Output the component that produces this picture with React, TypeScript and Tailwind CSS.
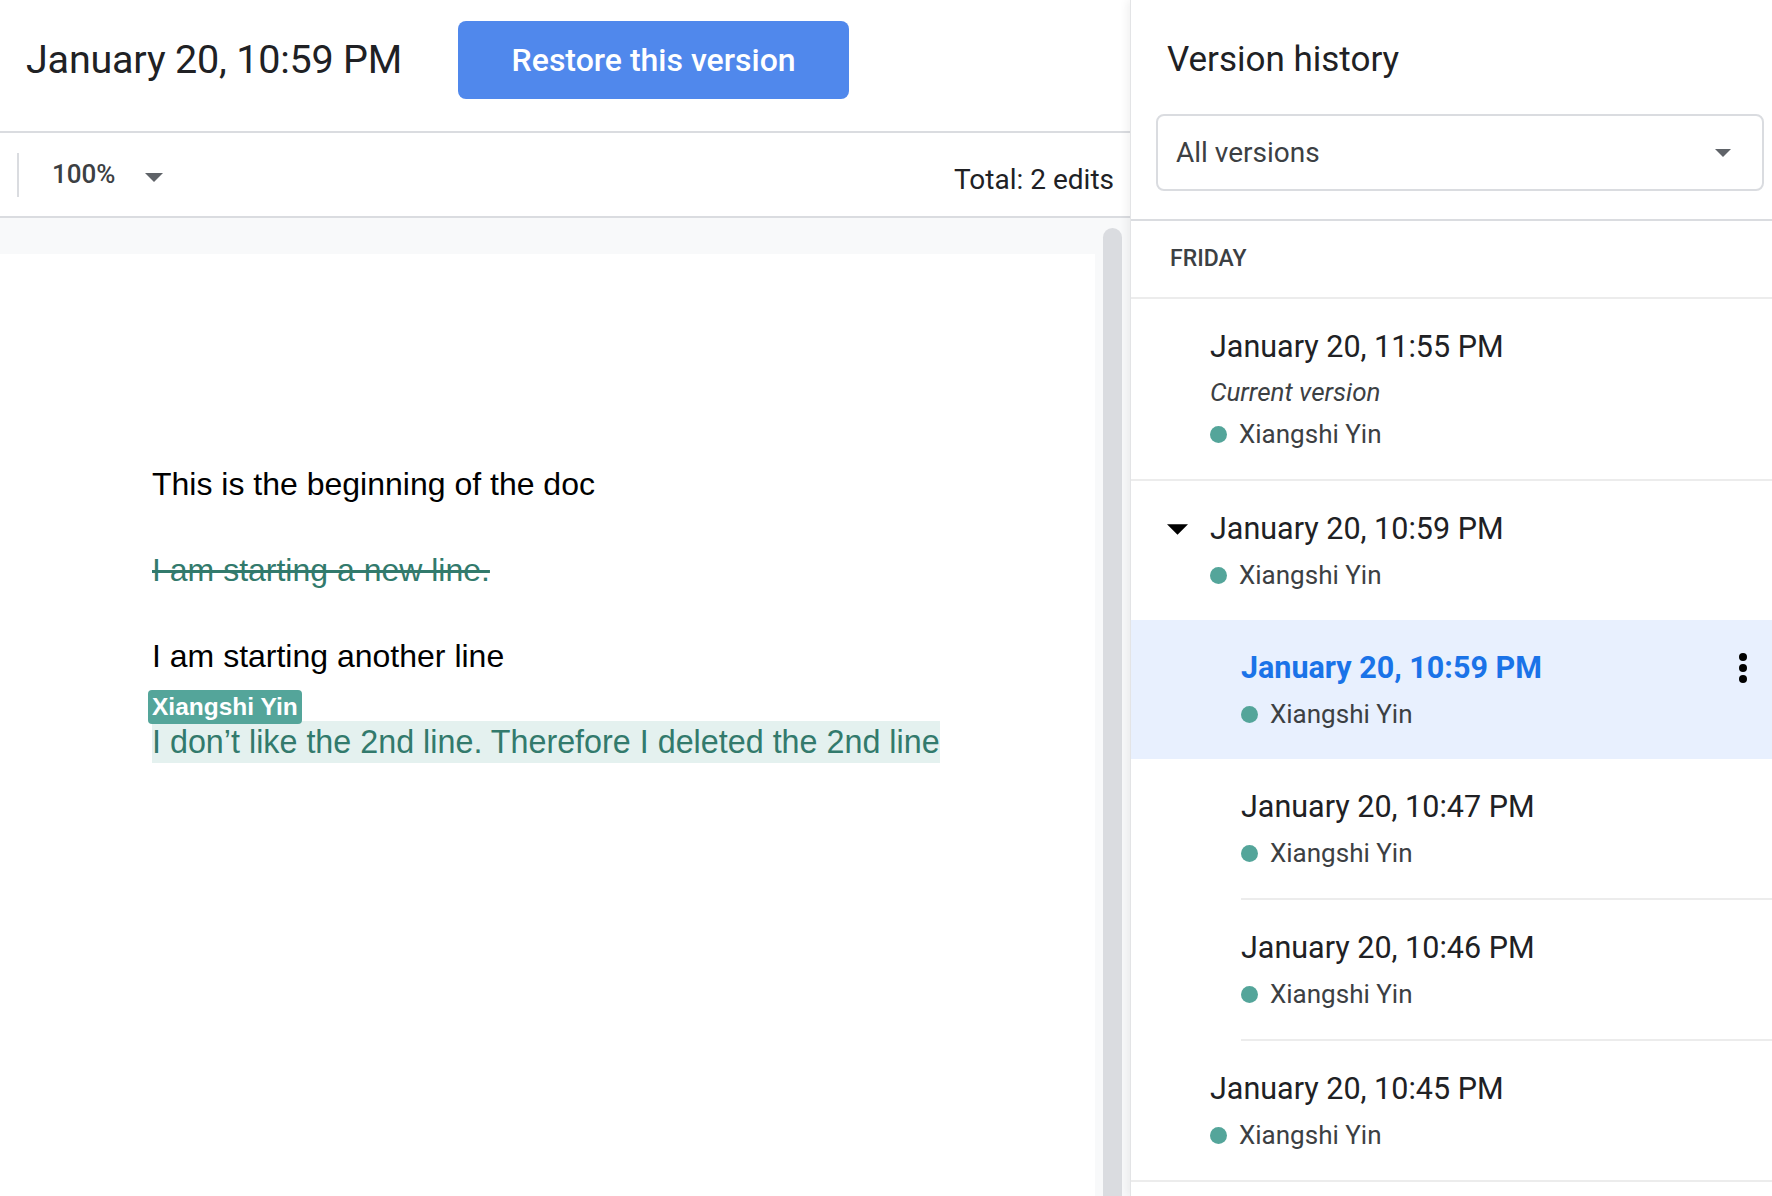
import React from "react";

const TEAL = "bg-[#54a59a]";

const Caret = ({ className }: { className?: string }) => (
  <svg viewBox="0 0 18 9" className={className}>
    <path d="M0 0h18L9 9z" fill="currentColor" />
  </svg>
);

const Author = () => (
  <div className="flex items-center h-[32px]">
    <span className={`w-[17px] h-[17px] rounded-full ${TEAL}`} />
    <span className="ml-[12px] text-[26px] leading-[32px] text-[#3c4043]">Xiangshi Yin</span>
  </div>
);

interface VersionProps {
  date: string;
  sub?: boolean;
  current?: boolean;
  expanded?: boolean;
  selected?: boolean;
  divider?: "full" | "inset" | "none";
}

const Version: React.FC<VersionProps> = ({ date, sub, current, expanded, selected, divider = "full" }) => {
  return (
    <li className={`${selected ? "bg-[#e8f0fe]" : ""} ${sub ? "pl-[110px]" : "pl-[79px]"}`}>
      <div
        className={`pt-[30px] pb-[29px] ${
          divider === "full" ? "border-b-2 border-[#ececec] -ml-[79px] pl-[79px]" : ""
        } ${divider === "inset" ? "border-b-2 border-[#ececec]" : ""}`}
      >
        <div className="flex items-center justify-between h-[36px] pr-[25px]">
          <div className="flex items-center">
            {expanded && <Caret className="w-[21px] h-[11px] -ml-[43px] mr-[22px] text-black" />}
            <span
              className={`text-[30.5px] leading-[36px] ${
                selected ? "font-bold text-[#1a73e8]" : "text-[#202124]"
              }`}
            >
              {date}
            </span>
          </div>
          {selected && (
            <svg viewBox="0 0 8 30" className="w-[8px] h-[30px]">
              <circle cx="4" cy="4" r="4" fill="#000" />
              <circle cx="4" cy="15" r="4" fill="#000" />
              <circle cx="4" cy="26" r="4" fill="#000" />
            </svg>
          )}
        </div>
        {current && (
          <div className="mt-[11px] mb-[-1px] h-[32px] text-[26px] leading-[32px] italic text-[#3c4043]">
            Current version
          </div>
        )}
        <div className={current ? "mt-[11px]" : "mt-[12px]"}>
          <Author />
        </div>
      </div>
    </li>
  );
};

export default function App() {
  return (
    <div className="flex w-[1772px] h-[1196px] overflow-hidden bg-white font-['Roboto',sans-serif]">
      {/* left: document preview */}
      <main className="flex flex-col w-[1130px] shrink-0">
        <header className="flex items-start h-[133px] pt-[21px] pl-[26px] border-b-2 border-[#dadce0]">
          <h1 className="flex items-center h-[78px] text-[39.5px] text-[#202124] tracking-[-0.2px]">
            January 20, 10:59 PM
          </h1>
          <button className="ml-[56px] h-[78px] w-[391px] rounded-[8px] bg-[#5088ec] text-white text-[32px] font-medium">
            Restore this version
          </button>
        </header>

        <div className="flex items-center h-[85px] border-b-2 border-[#dadce0]">
          <span className="ml-[17px] w-[2px] h-[44px] bg-[#dadce0]" />
          <span className="ml-[33px] text-[26px] font-medium text-[#3c4043]">100%</span>
          <Caret className="ml-[30px] mt-[6px] w-[18px] h-[9px] text-[#5f6368]" />
          <span className="ml-auto mr-[16px] mt-[10px] text-[28px] text-[#202124]">Total: 2 edits</span>
        </div>

        <div className="flex flex-1 bg-[#f8f9fa]">
          <div className="mt-[36px] w-[1095px] bg-white pl-[152px] pt-[209px] font-['Liberation_Sans',Arial,sans-serif] text-[32px] leading-[42px]">
            <div className="flex flex-col items-start gap-[44px]">
              <p className="text-black">This is the beginning of the doc</p>
              <p className="text-[#327a6c] line-through decoration-[#327a6c] decoration-[3px]">
                I am starting a new line.
              </p>
              <p className="text-black">I am starting another line</p>
              <p className="relative">
                <span className="absolute -top-[31px] -left-[4px] h-[34px] px-[4px] rounded-[4px] bg-[#54a59a] text-white text-[24.5px] leading-[34px] font-bold whitespace-nowrap">
                  Xiangshi Yin
                </span>
                <span className="inline-block bg-[#e4f1ef] text-[#327a6c] text-[32.3px] leading-[42px]">
                  I don’t like the 2nd line. Therefore I deleted the 2nd line
                </span>
              </p>
            </div>
          </div>
          <div className="flex-1">
            <div className="ml-[8px] mt-[10px] w-[19px] h-full rounded-t-full bg-[#dadce0]" />
          </div>
        </div>
      </main>

      {/* right: version history */}
      <aside className="w-[642px] shrink-0 border-l border-[#e3e4e6] shadow-[-3px_0_8px_rgba(0,0,0,0.06)] z-10 bg-white">
        <div className="pt-[40px] pb-[28px] border-b-2 border-[#dadce0]">
          <h2 className="pl-[36px] h-[40px] text-[35px] leading-[40px] text-[#202124]">Version history</h2>
          <div className="ml-[25px] mt-[34px] flex items-center justify-between w-[608px] h-[77px] border-2 border-[#dadce0] rounded-[8px] pl-[18px] pr-[31px]">
            <span className="text-[28px] text-[#3c4043]">All versions</span>
            <Caret className="w-[16px] h-[8px] text-[#5f6368]" />
          </div>
        </div>

        <div className="flex items-center h-[78px] pl-[39px] border-b-2 border-[#ececec] text-[23px] font-medium text-[#3c4043]">
          FRIDAY
        </div>

        <ul>
          <Version date="January 20, 11:55 PM" current />
          <Version date="January 20, 10:59 PM" expanded divider="none" />
          <Version date="January 20, 10:59 PM" sub selected divider="none" />
          <Version date="January 20, 10:47 PM" sub divider="inset" />
          <Version date="January 20, 10:46 PM" sub divider="inset" />
          <Version date="January 20, 10:45 PM" />
        </ul>
      </aside>
    </div>
  );
}
